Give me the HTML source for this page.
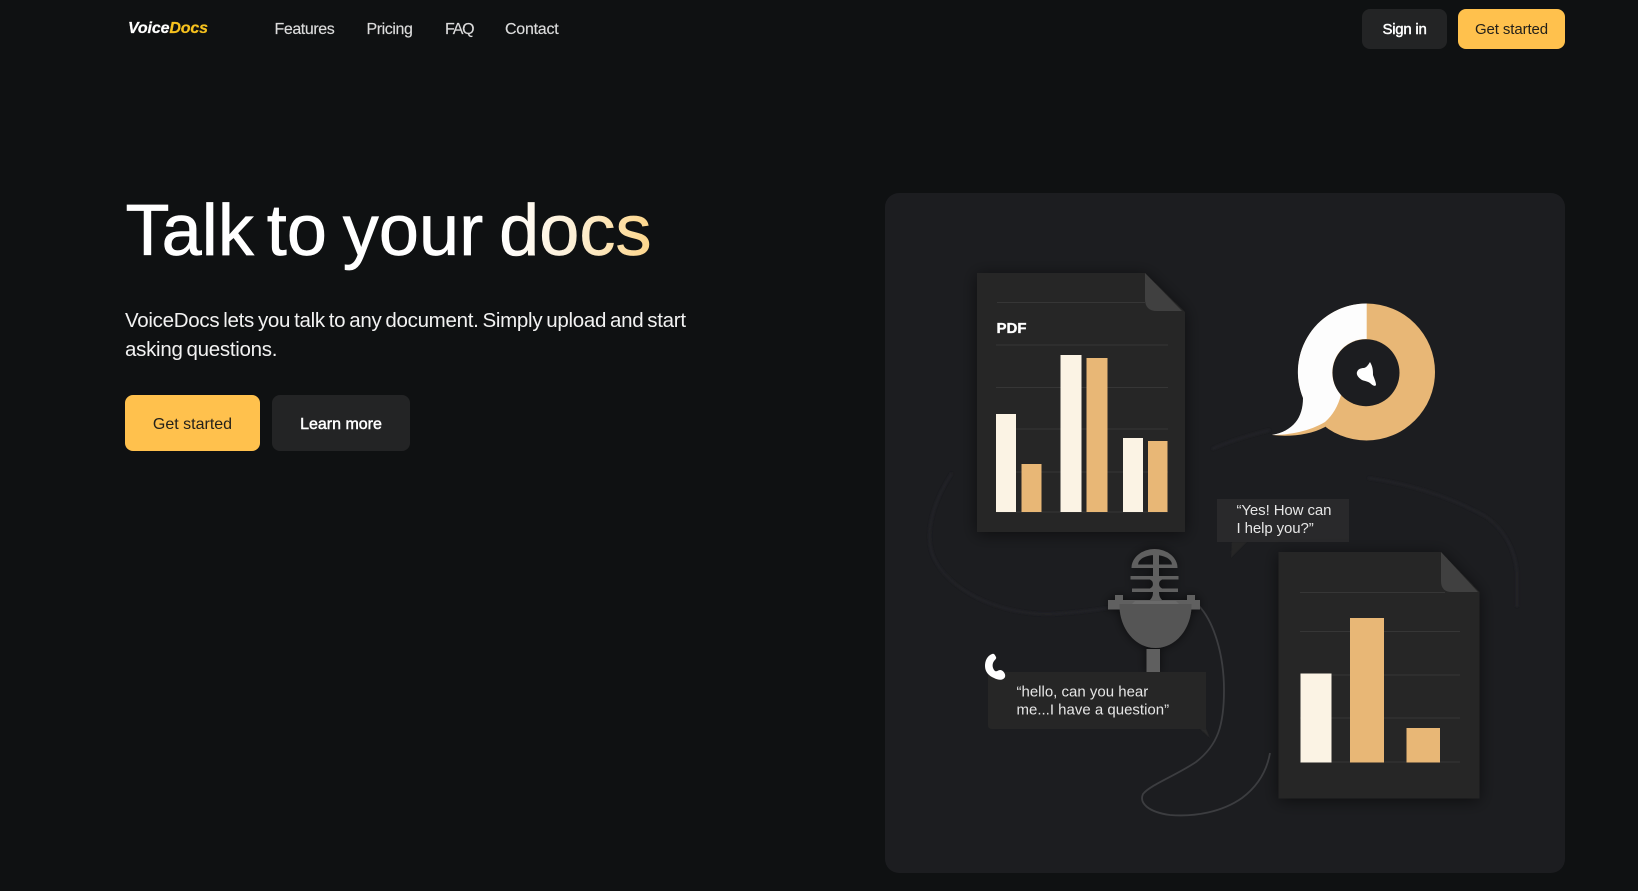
<!DOCTYPE html>
<html lang="en">
<head>
<meta charset="utf-8">
<title>VoiceDocs</title>
<style>
html,body{margin:0;padding:0;width:1638px;height:891px;overflow:hidden;background:#0f1112;font-family:"Liberation Sans",Arial,sans-serif}
.a{position:absolute;white-space:nowrap}
.nav{font-size:16px;letter-spacing:-.42px;color:#dcdcdc;top:21px;line-height:18px;-webkit-text-stroke:.15px #dcdcdc}
.btn{position:absolute;display:flex;align-items:center;justify-content:center;box-sizing:border-box;border-radius:8px}
.y{background:#ffc14d;color:#24211a}
.d{background:#232425;color:#fff;-webkit-text-stroke:.45px #fff}
</style>
</head>
<body>
<div class="a" style="left:128px;top:20px;font-size:16px;line-height:18px;font-weight:bold;font-style:italic;letter-spacing:-.15px;color:#fff;-webkit-text-stroke:.2px #fff">Voice<span style="color:#f7c21e;-webkit-text-stroke:.2px #f7c21e">Docs</span></div>
<div class="a nav" style="left:274.5px">Features</div>
<div class="a nav" style="left:366.5px">Pricing</div>
<div class="a nav" style="left:445px;letter-spacing:-1.2px">FAQ</div>
<div class="a nav" style="left:505px;letter-spacing:-.25px">Contact</div>
<div class="btn d" style="left:1362px;top:9px;width:85px;height:40px;font-size:15px;letter-spacing:-.25px">Sign in</div>
<div class="btn y" style="left:1458px;top:9px;width:107px;height:40px;font-size:15px;letter-spacing:-.1px">Get started</div>

<div class="a" style="left:125.5px;top:191px;font-size:72px;line-height:80px;letter-spacing:.1px;word-spacing:-4.3px;color:#fff;-webkit-text-stroke:.7px #fff">Talk <span style="margin-left:-3px">to</span> your <span style="background:linear-gradient(90deg,#fff 0%,#fdf1da 45%,#fdd68a 100%);-webkit-background-clip:text;background-clip:text;color:transparent;-webkit-text-stroke:.7px transparent">docs</span></div>
<div class="a" style="left:125px;top:306px;font-size:20.5px;line-height:29px;letter-spacing:-.28px;word-spacing:-1.5px;color:#f2f2f2">VoiceDocs lets you talk to any document. Simply upload and start<br>asking questions.</div>
<div class="btn y" style="left:125px;top:395px;width:135px;height:56px;font-size:16px;padding-top:3px">Get started</div>
<div class="btn d" style="left:272px;top:395px;width:138px;height:56px;font-size:16px;padding-top:3px">Learn more</div>

<svg class="a" style="left:0;top:0" width="1638" height="891" viewBox="0 0 1638 891" xmlns="http://www.w3.org/2000/svg">
<defs>
<filter id="s" x="-20%" y="-20%" width="140%" height="140%"><feDropShadow dx="0" dy="2" stdDeviation="8" flood-color="#000" flood-opacity=".55"/></filter>
<filter id="m" x="-30%" y="-30%" width="160%" height="160%"><feDropShadow dx="0" dy="0" stdDeviation="5" flood-color="#000" flood-opacity=".6"/></filter>
<filter id="b"><feGaussianBlur stdDeviation="1"/></filter>
<filter id="t"><feGaussianBlur stdDeviation=".4"/></filter>
</defs>
<rect x="885" y="193" width="680" height="680" rx="14" fill="#1c1d20"/>

<g fill="none" stroke="#232428" stroke-width="2.5" filter="url(#b)">
<path d="M952 473C934 500 925 530 932 553C945 590 1000 615 1050 614C1075 613 1095 610 1108 608"/>
<path d="M1368 478C1410 484 1450 497 1485 516C1505 530 1515 550 1517 572L1517 607"/>
<path d="M1212 449C1230 441 1250 435 1270 430"/>
</g>

<path d="M977 273H1145L1185 312V532H977Z" fill="#262626" filter="url(#s)"/>
<path d="M1145 273L1182 311H1157Q1145 311 1145 299Z" fill="#404040"/>
<g stroke="#363636" stroke-width="1">
<path d="M997 302.5H1146M996 345H1168M996 387.5H1168M996 429H1168M996 472H1168M996 512H1168"/>
</g>
<text x="996.5" y="333" font-family="Liberation Sans" font-size="15" font-weight="bold" fill="#fff" stroke="#fff" stroke-width=".3">PDF</text>
<g fill="#fbf3e4">
<rect x="996" y="414" width="20" height="98"/><rect x="1060.5" y="355" width="21" height="157"/><rect x="1123" y="438" width="20" height="74"/>
</g>
<g fill="#e8b776">
<rect x="1021.5" y="464" width="20" height="48"/><rect x="1086.5" y="358" width="21" height="154"/><rect x="1148" y="441" width="19.5" height="71"/>
</g>

<circle cx="1366.5" cy="372" r="68.5" fill="#e8b776"/>
<path d="M1272 435C1290 437 1310 435 1325 427L1340 400L1310 410C1300 425 1285 433 1272 435Z" fill="#e8b776"/>
<path d="M1366.7 303.5A68.5 68.5 0 0 0 1303 398C1303 418 1293 431 1272 435C1290 435 1310 431 1325 422C1333 415 1338 406 1341 395A33.5 33.5 0 0 1 1366.7 339Z" fill="#fdfdfd"/>
<circle cx="1366" cy="372.7" r="33.5" fill="#1c1d20"/>
<path d="M1370 362C1373 367 1373 371 1373 375C1374 378 1376 382 1376 385C1375 387 1372 385 1370 383C1367 381 1364 381 1362 380C1359 378 1356 375 1357 372C1358 369 1361 368 1364 368C1367 367 1368 365 1370 362Z" fill="#fff"/>

<path d="M1232 542L1231 558L1247 542Z" fill="#252527" filter="url(#t)"/>
<rect x="1217" y="499" width="132" height="43" fill="#29292b"/>
<text font-family="Liberation Sans" font-size="15" letter-spacing="-.1" fill="#e6e6e6"><tspan x="1236.5" y="515">“Yes! How can</tspan><tspan x="1236.5" y="533">I help you?”</tspan></text>

<path d="M1278.5 552H1441L1479.5 592V798.5H1278.5Z" fill="#272727" filter="url(#s)"/>
<path d="M1441 552L1478 592H1452Q1441 592 1441 581Z" fill="#404040"/>
<g stroke="#363636" stroke-width="1">
<path d="M1300 592.5H1445M1300 631.5H1460M1300 675H1460M1300 718H1460M1300 762H1460"/>
</g>
<rect x="1300.5" y="673.5" width="31" height="89" fill="#fbf3e4"/>
<rect x="1350" y="618" width="34" height="144.5" fill="#e8b776"/>
<rect x="1406.5" y="728" width="33.5" height="34.5" fill="#e8b776"/>

<path d="M1199 606C1214 622 1224 655 1224 690C1224 725 1218 745 1196 762C1175 776 1150 785 1143 794C1139 803 1148 812 1170 815C1195 817 1222 812 1242 798C1258 786 1267 770 1270 753" fill="none" stroke="#3c3d40" stroke-width="1.8"/>

<g filter="url(#m)">
<g fill="#606060">
<path fill-rule="evenodd" d="M1131.5 568A23 19 0 0 1 1177.5 568ZM1138 564.5H1172A17 9.5 0 0 0 1138 564.5Z"/>
<rect x="1153" y="552" width="6" height="49"/>
<rect x="1130.5" y="576" width="48" height="3.5"/>
<rect x="1132" y="588.5" width="46" height="3.5"/>
<path d="M1150 600Q1153 597 1153 593H1159Q1159 597 1162 600Z"/>
<path d="M1150 579.5Q1153 581 1153 584Q1153 587 1150 588.5H1162Q1159 587 1159 584Q1159 581 1162 579.5Z"/>
<rect x="1115" y="595" width="8" height="6"/>
<rect x="1187" y="595" width="8" height="6"/>
<rect x="1108" y="600" width="92" height="9.5"/>
</g>
<path d="M1119.5 604H1191.5C1192 628 1176 648 1155.5 648C1135 648 1119 628 1119.5 604Z" fill="#555"/>
<path d="M1135 601H1176L1179 604H1132Z" fill="#6a6a6a"/>
<rect x="1146.5" y="649" width="13.5" height="24" fill="#5e5e5e"/>
</g>

<path d="M1200 729L1210 738L1206 729Z" fill="#2a2a2a" filter="url(#t)"/>
<path d="M988 676Q988 672 992 672H1206V729H992Q988 729 988 725Z" fill="#262626"/>
<text font-family="Liberation Sans" font-size="15" letter-spacing="0" fill="#e6e6e6"><tspan x="1016.5" y="696.5">“hello, can you hear</tspan><tspan x="1016.5" y="714.5">me...I have a question”</tspan></text>

<path d="M992 654C987 656 985 661 985 666C985 672 989 676 994 678C998 680 1003 681 1005 677C1006 674 1003 670 1000 670C998 670 997 672 995 671C993 669 992 666 993 663C994 660 997 659 996 657C995 655 994 653 992 654Z" fill="#fff"/>
</svg>
</body>
</html>
